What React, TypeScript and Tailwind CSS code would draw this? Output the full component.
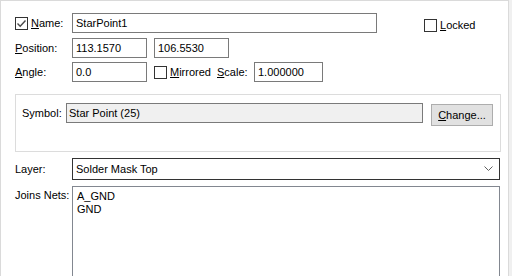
import React from "react";

// Small Windows-style checkbox
function CheckBox({ checked }: { checked?: boolean }) {
  return (
    <div className="w-[13px] h-[13px] border border-[#333333] bg-white flex items-center justify-center shrink-0">
      {checked && (
        <svg width="11" height="11" viewBox="0 0 11 11">
          <path d="M1.5 5.5 L4.2 8.2 L9.5 2.5" fill="none" stroke="#4a4a4a" strokeWidth="1.4" />
        </svg>
      )}
    </div>
  );
}

function TextBox({ value, className }: { value: string; className: string }) {
  return (
    <div className={`h-[20px] border border-[#7a7a7a] bg-white flex items-center pl-[3px] text-black shrink-0 ${className}`}>
      {value}
    </div>
  );
}

export default function App() {
  return (
    <div
      className="w-[512px] h-[276px] overflow-hidden bg-[#f0f0f0] flex text-[11px] leading-[13px] text-black"
      style={{ fontFamily: '"Liberation Sans", Arial, sans-serif' }}
    >
      <div className="w-[509px] h-full bg-white border-t border-l border-r border-[#dadada] flex flex-col pl-[14px]">
        {/* Name row */}
        <div className="mt-[12px] h-[20px] flex items-center shrink-0">
          <CheckBox checked />
          <span className="ml-[3px] w-[41px]">
            <u>N</u>ame:
          </span>
          <TextBox value="StarPoint1" className="w-[305px]" />
          <div className="ml-[47px] mt-[4px] flex items-center">
            <CheckBox />
            <span className="ml-[3px]">
              <u>L</u>ocked
            </span>
          </div>
        </div>

        {/* Position row */}
        <div className="mt-[5px] h-[20px] flex items-center shrink-0">
          <span className="w-[57px]">
            <u>P</u>osition:
          </span>
          <TextBox value="113.1570" className="w-[75px]" />
          <TextBox value="106.5530" className="w-[75px] ml-[7px]" />
        </div>

        {/* Angle row */}
        <div className="mt-[4px] h-[20px] flex items-center shrink-0">
          <span className="w-[57px]">
            <u>A</u>ngle:
          </span>
          <TextBox value="0.0" className="w-[75px]" />
          <div className="ml-[7px] flex items-center">
            <CheckBox />
            <span className="ml-[3px] w-[47px]">
              <u>M</u>irrored
            </span>
          </div>
          <span className="w-[37px]">
            <u>S</u>cale:
          </span>
          <TextBox value="1.000000" className="w-[69px]" />
        </div>

        {/* Symbol group */}
        <div className="mt-[12px] w-[486px] h-[58px] shrink-0 border border-[#dcdcdc] flex items-start pl-[6px] pt-[8px]">
          <span className="w-[44px] h-[20px] flex items-center">Symbol:</span>
          <div className="w-[357px] h-[20px] border border-[#7a7a7a] bg-[#f0f0f0] flex items-center pl-[2px]">
            Star Point (25)
          </div>
          <div className="ml-[8px] mt-[1px] w-[62px] h-[22px] border border-[#adadad] bg-[#e1e1e1] flex items-center justify-center">
            <span>
              <u>C</u>hange...
            </span>
          </div>
        </div>

        {/* Layer row */}
        <div className="mt-[6px] h-[22px] flex items-center shrink-0">
          <span className="w-[57px]">Layer:</span>
          <div className="w-[428px] h-[22px] border border-[#333333] bg-white flex items-center justify-between pl-[3px] pr-[6px]">
            <span>Solder Mask Top</span>
            <svg width="9" height="6" viewBox="0 0 9 6">
              <path d="M0.5 0.5 L4.5 4.5 L8.5 0.5" fill="none" stroke="#606060" strokeWidth="1" />
            </svg>
          </div>
        </div>

        {/* Joins nets */}
        <div className="mt-[6px] flex items-start shrink-0">
          <span className="w-[57px] pr-[4px] text-right pt-[3px] whitespace-nowrap">Joins Nets:</span>
          <div className="w-[428px] h-[100px] border border-[#828790] bg-white pl-[4px] pt-[3px]">
            <div>A_GND</div>
            <div>GND</div>
          </div>
        </div>
      </div>
    </div>
  );
}
